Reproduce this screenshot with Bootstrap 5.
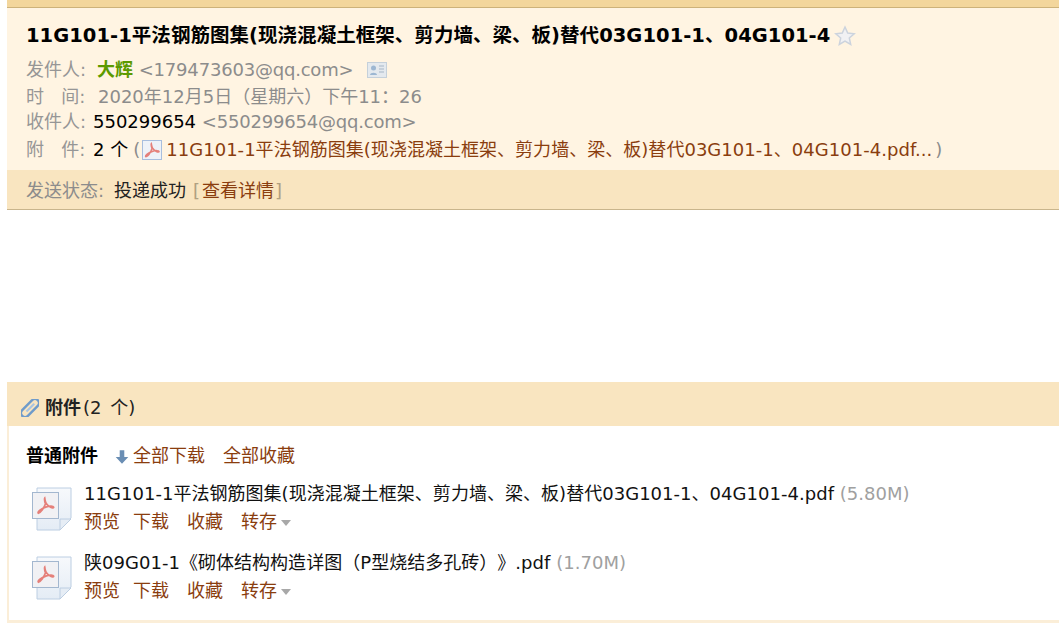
<!DOCTYPE html>
<html lang="zh-CN">
<head>
<meta charset="utf-8">
<title>邮件</title>
<link href="https://cdn.jsdelivr.net/npm/bootstrap@5.3.0/dist/css/bootstrap.min.css" rel="stylesheet">
<style>
html,body{height:100%;overflow:hidden}
body{background:#fff;color:#000;font-family:"DejaVu Sans","Noto Sans CJK SC",sans-serif;font-size:18px;line-height:26px;padding-left:7px;text-spacing-trim:space-all}
a{color:#8a3d0e;text-decoration:none}
.topstrip{height:7px;background:#f3d69c;border-bottom:1px solid #cdb27a;box-sizing:content-box}
.mailhead{background:#fff4e2;height:162px;padding:15px 0 0 19px}
.subject{font-size:19.5px;font-weight:700;line-height:26px;margin-bottom:8px;height:26px;white-space:nowrap;letter-spacing:.04px}
.meta-row{color:#8c8c8c;line-height:26px;white-space:nowrap}
.row-a{height:27px}
.row-b{height:25px}
.row-c{height:28px}
.lbl{color:#969696;display:inline-block;width:67px}
.lbl-wide{width:71px}
.lbl-time{width:72px}
.sender{color:#5c9a00;font-weight:700}
.count-text{margin-right:5px}
.mail-addr{letter-spacing:-.2px}
.pdf-mini{vertical-align:-4px;margin:0 4px 0 2px}
.head-link{letter-spacing:.03px}
.close-paren{margin-left:3px}
.statusbar{background:#f9e5c0;height:40px;border-bottom:1px solid #c9b58c;padding-left:19px;line-height:41px;color:#8c8c8c}
.status-label{display:inline-block;width:88px}
.statusbar .val{color:#222}
.brk{color:#b0a080}
.brk-l{margin:0 2px 0 7px}
.brk-r{margin-left:1px}
.spacer{height:172px}
.attach{border-left:2px solid #fbeed8;border-bottom:3px solid #fbeed8;height:241px}
.attach-head{background:#f9e5c0;height:44px;line-height:48px;margin-left:-2px;padding-left:14px;color:#222;white-space:nowrap}
.attach-head b{font-family:"Noto Sans CJK SC",sans-serif}
.attach-count{margin-left:2px;word-spacing:3px}
.attach-tools{padding:6px 0 0 17px;height:53px;line-height:44px;white-space:nowrap}
.attach-tools b{font-family:"Noto Sans CJK SC",sans-serif;margin-right:17px}
.attach-tools a+a{margin-left:18px}
.file-item{height:68.5px;padding-left:22px;gap:12px}
.pdf-big{width:41px;height:44px;margin-top:8px}
.file-info{line-height:28px;padding-top:1px}
.file-name{color:#111;white-space:nowrap;letter-spacing:.03px}
.fsize{color:#a0a0a0}
.file-links a{margin-right:18px}
.file-links a:first-child{margin-right:13px}
.file-links a:nth-child(4){margin-right:0}
.caret-x{display:inline-block;border:5px solid transparent;border-top:6px solid #a8a8a8;border-bottom:0;vertical-align:2px;margin-left:4px}
</style>
</head>
<body>
<svg width="0" height="0" class="position-absolute">
<defs>
<linearGradient id="pageFill" x1="0" y1="0" x2="0" y2="1"><stop offset="0" stop-color="#f7f9fc"/><stop offset="1" stop-color="#e4ecf5"/></linearGradient>
<symbol id="acro" viewBox="0 0 20 20">
<path d="M10 3c-1.200 0-1 3 0 5.500C8.800 12 6 16 3.800 16.700c-1.200-1 2.500-4 7-5.500 2.200-.7 6.500-1 6.300.5-.5 1.200-4.600-.7-6.300-3.200C9.500 6 9 3 10 3z" fill="none" stroke="#e5807a" stroke-width="1.500"/>
</symbol>
<symbol id="pdfbig" viewBox="0 0 41 44">
<path d="M6 1h34v30l-11 12H6z" fill="url(#pageFill)" stroke="#bccee2"/>
<path d="M29 43V32h11z" fill="#e6edf5" stroke="#bccee2"/>
<rect x="1.500" y="5.500" width="26" height="26" fill="#f1f1f4" stroke="#a3b7cf"/>
<svg x="3" y="7" width="23" height="23" viewBox="0 0 20 20"><use href="#acro"/></svg>
</symbol>
</defs>
</svg>

<div class="topstrip"></div>
<div class="mailhead">
  <div class="subject">11G101-1平法钢筋图集(现浇混凝土框架、剪力墙、梁、板)替代03G101-1、04G101-4<svg width="22" height="22" viewBox="0 0 22 22" class="ms-1" style="vertical-align:-5px"><path d="M11 2l2.700 6 6.500.7-4.900 4.300 1.400 6.400L11 16.100l-5.700 3.300 1.400-6.400L1.800 8.700 8.300 8z" fill="#f1f1f3" stroke="#ccd3dd" stroke-width="1.500"/></svg></div>
  <div class="meta-row row-a"><span class="lbl lbl-wide">发件人:</span><span class="sender">大辉</span> <span class="mail-addr">&lt;179473603@qq.com&gt;</span> <svg width="20" height="16" viewBox="0 0 20 16" class="ms-2" style="vertical-align:-2px"><rect x=".5" y=".5" width="19" height="15" fill="#e4e9ee" stroke="#c5d0da"/><circle cx="6.500" cy="6" r="2.500" fill="#9db7d2"/><path d="M3 13c0-3 7-3 7 0z" fill="#9db7d2"/><path d="M12 4h5M12 7h5M12 10h5" stroke="#a7b6c6"/></svg></div>
  <div class="meta-row row-b"><span class="lbl lbl-time">时&nbsp;&nbsp;&nbsp;间:</span>2020年12月5日（星期六）下午11：26</div>
  <div class="meta-row row-c"><span class="lbl">收件人:</span><span class="text-black">550299654</span> <span class="mail-addr">&lt;550299654@qq.com&gt;</span></div>
  <div class="meta-row"><span class="lbl">附&nbsp;&nbsp;&nbsp;件:</span><span class="text-black count-text">2 个</span>(<svg width="20" height="20" viewBox="0 0 20 20" class="pdf-mini"><rect x=".5" y=".5" width="19" height="19" fill="#eef2f8" stroke="#a8bede"/><use href="#acro"/></svg><a href="#" class="head-link">11G101-1平法钢筋图集(现浇混凝土框架、剪力墙、梁、板)替代03G101-1、04G101-4.pdf...</a><span class="close-paren">)</span></div>
</div>
<div class="statusbar"><span class="status-label">发送状态:</span><span class="val">投递成功</span><span class="brk brk-l">[</span><a href="#">查看详情</a><span class="brk brk-r">]</span></div>

<div class="spacer"></div>

<div class="attach">
  <div class="attach-head"><svg width="18" height="18" viewBox="0 0 18 18" style="margin-right:6px;vertical-align:-3px"><g transform="rotate(45 9 9)" fill="none"><rect x="5" y="-2" width="8" height="22" rx="4" stroke="#6f9bca" stroke-width="2.400"/><path d="M9 3v11" stroke="#a8c4e2" stroke-width="2"/></g></svg><b>附件</b><span class="attach-count">(2 个)</span></div>
  <div class="attach-tools"><b>普通附件</b><svg width="14" height="16" viewBox="0 0 12 14" style="margin-right:4px;vertical-align:-3px"><path d="M4 1h4v6h3.500L6 13 .5 7H4z" fill="#6a8eb4"/></svg><a href="#">全部下载</a><a href="#">全部收藏</a></div>
  <div class="file-item d-flex">
    <svg class="pdf-big flex-shrink-0"><use href="#pdfbig"/></svg>
    <div class="file-info">
      <div class="file-name">11G101-1平法钢筋图集(现浇混凝土框架、剪力墙、梁、板)替代03G101-1、04G101-4.pdf <span class="fsize">(5.80M)</span></div>
      <div class="file-links"><a href="#">预览</a><a href="#">下载</a><a href="#">收藏</a><a href="#">转存</a><span class="caret-x"></span></div>
    </div>
  </div>
  <div class="file-item d-flex">
    <svg class="pdf-big flex-shrink-0"><use href="#pdfbig"/></svg>
    <div class="file-info">
      <div class="file-name">陕09G01-1《砌体结构构造详图（P型烧结多孔砖）》.pdf <span class="fsize">(1.70M)</span></div>
      <div class="file-links"><a href="#">预览</a><a href="#">下载</a><a href="#">收藏</a><a href="#">转存</a><span class="caret-x"></span></div>
    </div>
  </div>
</div>
<script src="https://cdn.jsdelivr.net/npm/bootstrap@5.3.0/dist/js/bootstrap.bundle.min.js"></script>
</body>
</html>
